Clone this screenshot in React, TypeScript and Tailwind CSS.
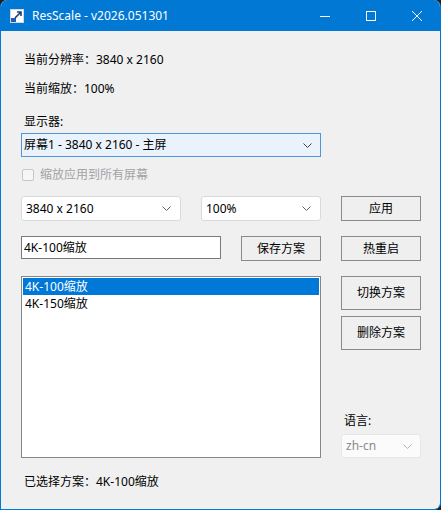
import React from "react";

const font = { fontFamily: '"Noto Sans", "Noto Sans CJK SC", sans-serif' };

function Chevron({ color = "#5f5f5f" }: { color?: string }) {
  return (
    <svg width="9" height="5" viewBox="0 0 9 5" className="shrink-0">
      <path d="M0.5 0.5 L4.5 4.5 L8.5 0.5" fill="none" stroke={color} strokeWidth="1" />
    </svg>
  );
}

function AppIcon() {
  return (
    <svg width="14" height="14" viewBox="0 0 14 14">
      <rect x="0.5" y="0.5" width="13" height="13" fill="#ffffff" stroke="#d0d8e0" />
      <rect x="1" y="9" width="5" height="4" fill="#1e5fb4" />
      <path d="M5 9 L11 3 M7 3 H11 V7" fill="none" stroke="#1c3f7a" strokeWidth="1.6" />
    </svg>
  );
}

function TitleBar() {
  return (
    <div className="flex h-[31px] items-center bg-[#0078d4] text-white">
      <div className="ml-[9px] mr-[8px] mt-[1px]">
        <AppIcon />
      </div>
      <span className="text-[12px]" style={font}>
        ResScale - v2026.051301
      </span>
      <div className="ml-auto flex h-full items-center">
        <div className="flex h-full w-[46px] items-center justify-center">
          <svg width="10" height="10" viewBox="0 0 10 10">
            <path d="M0 5.5 H10" stroke="#fff" strokeWidth="1" />
          </svg>
        </div>
        <div className="flex h-full w-[46px] items-center justify-center">
          <svg width="10" height="10" viewBox="0 0 10 10">
            <rect x="0.5" y="0.5" width="9" height="9" fill="none" stroke="#fff" strokeWidth="1" />
          </svg>
        </div>
        <div className="flex h-full w-[46px] items-center justify-center">
          <svg width="10" height="10" viewBox="0 0 10 10">
            <path d="M0 0 L10 10 M10 0 L0 10" stroke="#fff" strokeWidth="1" />
          </svg>
        </div>
      </div>
    </div>
  );
}

function Button({ label, tall }: { label: string; tall?: boolean }) {
  return (
    <div
      className={`flex w-[80px] items-center justify-center border border-[#8a8a8a] bg-[#efefef] text-[12px] text-black ${
        tall ? "h-[34px]" : "h-[25px]"
      }`}
    >
      {label}
    </div>
  );
}

function Select({ value, width }: { value: string; width: string }) {
  return (
    <div
      className={`flex h-[25px] items-center justify-between rounded-[3px] border border-[#dadada] bg-white pl-[4px] pr-[9px] text-[12px] text-black ${width}`}
    >
      <span>{value}</span>
      <Chevron />
    </div>
  );
}

export default function App() {
  const plans = ["4K-100缩放", "4K-150缩放"];

  return (
    <div className="h-[510px] w-[441px] bg-[#202020]" style={font}>
      <div className="flex h-full flex-col overflow-hidden rounded-t-[7px] rounded-br-[7px] border border-t-0 border-[#0078d4] bg-[#f0f0f0]">
        <TitleBar />

        <div className="flex flex-col pl-[20px] text-[12px] leading-[16px] text-black">
          <div className="mt-[21px] pl-[3px]">当前分辨率：3840 x 2160</div>
          <div className="mt-[13px] pl-[3px]">当前缩放：100%</div>
          <div className="mt-[17px] pl-[3px]">显示器:</div>

          <div className="mt-[3px] flex h-[24px] w-[300px] items-center justify-between border border-[#4f97dc] bg-[#eaf3fc] pl-[2px] pr-[8px]">
            <span>屏幕1 - 3840 x 2160 - 主屏</span>
            <Chevron color="#404040" />
          </div>

          <div className="mt-[10px] flex items-center">
            <div className="ml-[1px] h-[12px] w-[12px] rounded-[2px] border border-[#c8c8c8] bg-[#f6f6f6]" />
            <span className="ml-[6px] text-[#a3a3a3]">缩放应用到所有屏幕</span>
          </div>

          <div className="mt-[13px] flex gap-[20px]">
            <div className="flex w-[300px] gap-[20px]">
              <Select value="3840 x 2160" width="w-[160px]" />
              <Select value="100%" width="w-[120px]" />
            </div>
            <Button label="应用" />
          </div>

          <div className="mt-[15px] flex gap-[20px]">
            <div className="flex w-[300px] items-start gap-[20px]">
              <div className="flex h-[23px] w-[200px] items-center border border-[#7a7a7a] bg-white pl-[2px]">
                4K-100缩放
              </div>
              <Button label="保存方案" />
            </div>
            <Button label="热重启" />
          </div>

          <div className="mt-[15px] flex gap-[20px]">
            <div className="h-[182px] w-[300px] border border-[#828790] bg-white p-[1px]">
              {plans.map((p, i) => (
                <div
                  key={p}
                  className={`h-[17px] pl-[2px] leading-[17px] ${
                    i === 0 ? "bg-[#0078d7] text-white" : "text-black"
                  }`}
                >
                  {p}
                </div>
              ))}
            </div>
            <div className="flex w-[80px] flex-col">
              <Button label="切换方案" tall />
              <div className="mt-[6px]">
                <Button label="删除方案" tall />
              </div>
              <div className="mt-auto pl-[3px]">语言:</div>
              <div className="mt-[5px] flex h-[24px] w-[80px] items-center justify-between rounded-[3px] border border-[#e6e6e6] bg-[#fbfbfb] pl-[4px] pr-[8px] text-[#8a8a8a]">
                <span>zh-cn</span>
                <Chevron color="#b5b5b5" />
              </div>
            </div>
          </div>

          <div className="mt-[16px] pl-[3px]">已选择方案：4K-100缩放</div>
        </div>
      </div>
    </div>
  );
}
